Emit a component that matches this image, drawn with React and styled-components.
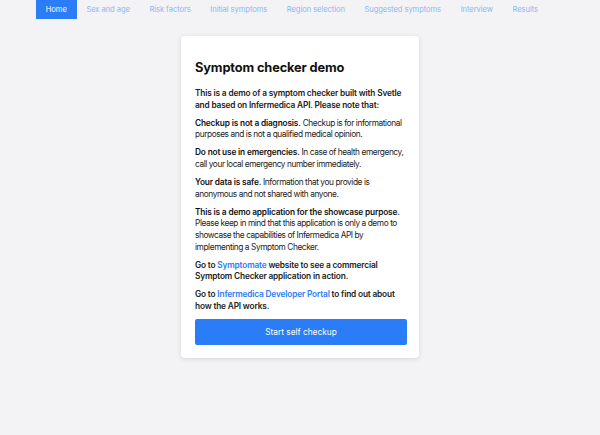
import React from "react";
import styled, { createGlobalStyle } from "styled-components";

const GlobalStyle = createGlobalStyle`
  html, body {
    margin: 0;
    padding: 0;
    background: #f3f2f4;
    font-family: Inter, "Noto Sans", sans-serif;
    color: #111;
  }
`;

const Page = styled.div`
  width: 600px;
  height: 435px;
  display: flex;
  flex-direction: column;
  align-items: center;
`;

const Nav = styled.nav`
  display: flex;
  align-self: flex-start;
  margin-left: 36px;
  height: 19px;
`;

const Tab = styled.a`
  display: flex;
  align-items: center;
  padding: 0 9.8px;
  font-size: 7.6px;
  letter-spacing: -0.01em;
  white-space: nowrap;
  color: ${(p) => (p.active ? "#fff" : "#8fb7f3")};
  background: ${(p) => (p.active ? "#2a7cf7" : "transparent")};
  text-decoration: none;
`;

const Card = styled.div`
  margin-top: 17px;
  width: 238px;
  box-sizing: border-box;
  padding: 24px 12px 13px 14px;
  background: #fff;
  border-radius: 4px;
  box-shadow: 0 1px 5px rgba(0, 0, 0, 0.12);
`;

const Title = styled.h1`
  margin: 0 0 12px;
  font-size: 12.8px;
  line-height: 16px;
  font-weight: 700;
  letter-spacing: -0.01em;
`;

const Para = styled.p`
  margin: 0 0 6.5px;
  font-size: 8.3px;
  line-height: 11.6px;
  letter-spacing: ${(p) => (p.bold ? "-0.02em" : "-0.05em")};
  font-weight: ${(p) => (p.bold ? 600 : 400)};
  color: #222;

  b {
    font-weight: 600;
    letter-spacing: -0.02em;
    color: #111;
  }
`;

const Link = styled.a`
  color: #2a7cf7;
  text-decoration: none;
`;

const Button = styled.button`
  display: block;
  width: 100%;
  height: 26px;
  margin-top: 5px;
  border: none;
  border-radius: 2px;
  background: #2a7cf7;
  color: #fff;
  font-family: inherit;
  font-size: 8.3px;
`;

const tabs = [
  "Home",
  "Sex and age",
  "Risk factors",
  "Initial symptoms",
  "Region selection",
  "Suggested symptoms",
  "Interview",
  "Results",
];

export default function App() {
  return (
    <>
      <GlobalStyle />
      <Page>
        <Nav>
          {tabs.map((t, i) => (
            <Tab key={t} active={i === 0}>
              {t}
            </Tab>
          ))}
        </Nav>
        <Card>
          <Title>Symptom checker demo</Title>
          <Para bold>
            This is a demo of a symptom checker built with Svetle and based on
            Infermedica API. Please note that:
          </Para>
          <Para>
            <b>Checkup is not a diagnosis.</b> Checkup is for informational
            purposes and is not a qualified medical opinion.
          </Para>
          <Para>
            <b>Do not use in emergencies.</b> In case of health emergency, call
            your local emergency number immediately.
          </Para>
          <Para>
            <b>Your data is safe.</b> Information that you provide is anonymous
            and not shared with anyone.
          </Para>
          <Para>
            <b>This is a demo application for the showcase purpose.</b> Please
            keep in mind that this application is only a demo to showcase the
            capabilities of Infermedica API by implementing a Symptom Checker.
          </Para>
          <Para bold>
            Go to <Link>Symptomate</Link> website to see a commercial Symptom
            Checker application in action.
          </Para>
          <Para bold>
            Go to <Link>Infermedica Developer Portal</Link> to find out about
            how the API works.
          </Para>
          <Button>Start self checkup</Button>
        </Card>
      </Page>
    </>
  );
}
